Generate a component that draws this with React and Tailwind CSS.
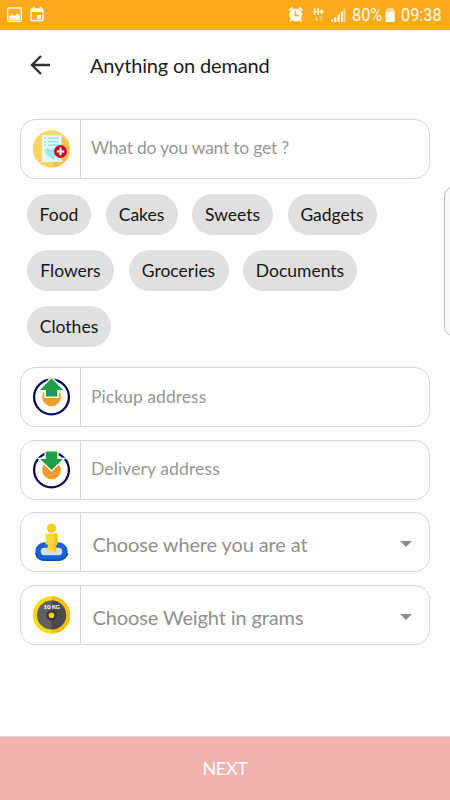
import React from "react";

const LATO = "font-['Lato',sans-serif]";

function ListIcon() {
  return (
    <svg width="40" height="40" viewBox="0 0 40 40">
      <defs>
        <clipPath id="list-clip"><circle cx="20.5" cy="20" r="18.7" /></clipPath>
      </defs>
      <circle cx="20.5" cy="20" r="18.7" fill="#fbd567" />
      <path d="M22 6.5 30.5 6.5 38 14V30L28 38H22Z" fill="#f6c24f" clipPath="url(#list-clip)" />
      <path d="M11 6.3H30.5V33H11Z" fill="#e0fafd" />
      <g fill="#8ee0ee">
        <rect x="13" y="8.5" width="2" height="1.3" /><rect x="17" y="8.5" width="11" height="1.3" />
        <rect x="13" y="12" width="2" height="1.3" /><rect x="17" y="12" width="11" height="1.3" />
        <rect x="13" y="15.5" width="2" height="1.3" /><rect x="17" y="15.5" width="11" height="1.3" />
      </g>
      <path d="M14 22c0-3 4-3.500 5.500-1 1.500-2.500 5.500-2 5.500 1L23.500 31C20 29 14 26 14 22Z" fill="#a2e3f2" />
      <circle cx="29.500" cy="22.500" r="6.500" fill="#c40d22" />
      <path d="M29.500 18.800v7.400M25.800 22.500h7.400" stroke="#fff" strokeWidth="2" />
    </svg>
  );
}

function PickupIcon() {
  return (
    <svg width="40" height="40" viewBox="0 0 40 40">
      <circle cx="20.500" cy="20" r="17.400" fill="#fff" stroke="#080c5c" strokeWidth="2.300" />
      <circle cx="20.500" cy="20" r="9.300" fill="#f59a2c" />
      <path d="M20.500 1.200 32 13H26.300V19.500H14.900V13H9Z" fill="#1fa046" stroke="#fff" strokeWidth="3" style={{ paintOrder: "stroke" }} />
    </svg>
  );
}

function DeliveryIcon() {
  return (
    <svg width="40" height="40" viewBox="0 0 40 40">
      <circle cx="20.500" cy="20" r="17.400" fill="#fff" stroke="#080c5c" strokeWidth="2.300" />
      <circle cx="20.500" cy="20" r="9.300" fill="#f59a2c" />
      <path d="M14.800 1.500H26.300V9H32L20.500 20 9 9H14.800Z" fill="#1fa046" stroke="#fff" strokeWidth="2.600" style={{ paintOrder: "stroke" }} />
    </svg>
  );
}

function PersonIcon() {
  return (
    <svg width="40" height="40" viewBox="0 0 40 40">
      <rect x="7" y="23" width="27" height="13" rx="6.500" fill="#d9dfe8" stroke="#1265d2" strokeWidth="5.500" />
      <path d="M4.700 31c1 5 5 7.200 9 7.200h13.600c5 0 8.500-3.200 9.400-7.200" fill="none" stroke="#0b4fb4" strokeWidth="1.500" />
      <path d="M14.500 11.500h12v11H25.200V29.500H16.700V22.500H14.500Z" fill="#fcd53a" />
      <path d="M23 11.500h3.500v11H25.200V29.500H23Z" fill="#f6c51f" />
      <circle cx="20.500" cy="6" r="4.500" fill="#fbc928" />
      <path d="M17 8.500c2 1.900 5.400 1.900 7.400 0" stroke="#f3b31b" strokeWidth="1" fill="none" />
    </svg>
  );
}

function WeightIcon() {
  return (
    <svg width="40" height="40" viewBox="0 0 40 40">
      <circle cx="20.500" cy="20" r="18.700" fill="#fddb09" />
      <path d="M20.500 1.300a18.700 18.700 0 0 1 0 37.400Z" fill="#f8bd12" />
      <circle cx="20.500" cy="20" r="14.600" fill="#606163" />
      <path d="M20.500 5.400a14.600 14.600 0 0 1 0 29.200Z" fill="#4a4a4c" />
      <circle cx="20.500" cy="20.300" r="5.200" fill="#38383a" />
      <circle cx="20.500" cy="20.300" r="2.800" fill="#fdce1a" />
      <text x="20.700" y="14" textAnchor="middle" fontFamily="Lato, sans-serif" fontWeight="900" fontSize="6" fill="#fff" textLength="16.500">10 KG</text>
    </svg>
  );
}

function Caret() {
  return (
    <svg width="12" height="6" viewBox="0 0 12 6" className="mt-[4px] mr-[17px] shrink-0">
      <path d="M0 0h12L6 6Z" fill="#8c8c8c" />
    </svg>
  );
}

function Field({ icon, label, select, textClass }) {
  return (
    <div className="flex h-[60px] w-[410px] items-stretch rounded-[15px] border border-[#d6d6d6] bg-white">
      <div className="flex w-[60px] shrink-0 items-center justify-center border-r border-[#d6d6d6]">{icon}</div>
      <div className="flex flex-1 items-center justify-between">
        <span className={`leading-6 whitespace-nowrap ${textClass}`}>{label}</span>
        {select && <Caret />}
      </div>
    </div>
  );
}

const selectText = "mt-[4px] ml-[11.500px] text-[20px] tracking-[-0.120px] text-[#8f8f8f]";

function StatusBar() {
  return (
    <div className="flex h-[30px] items-center bg-[#fbab1a] text-white">
      <svg width="50" height="30" viewBox="0 0 50 30" className="shrink-0">
        <rect x="7.700" y="8" width="13.600" height="13.300" rx="1" fill="none" stroke="#fffbe8" strokeWidth="1.400" />
        <path d="M9 17l3-3 2.500 2.200 3-3L20 16v4H9Z" fill="#fffbe8" />
        <rect x="31" y="9" width="12" height="11.500" rx="1" fill="none" stroke="#fffbe8" strokeWidth="1.500" />
        <path d="M31 9h12v3H31zM32.800 6.800h1.800v3h-1.800zM39.700 6.800h1.800v3h-1.800zM37 15h4v4h-4z" fill="#fffbe8" />
      </svg>
      <svg width="66" height="30" viewBox="284 0 66 30" className="ml-[234px] shrink-0">
        <circle cx="295.700" cy="15" r="6.500" fill="#fffbe8" />
        <path d="M289 10.500l3.500-3M302.400 10.500l-3.500-3M291.500 19.500l-1.500 2M300 19.500l1.500 2" stroke="#fffbe8" strokeWidth="1.700" />
        <path d="M295.500 11.200v4.300h3" fill="none" stroke="#fbab1a" strokeWidth="1.400" />
        <text x="313.500" y="14.500" fontFamily="Roboto, sans-serif" fontWeight="700" fontSize="8.500" fill="#fffbe8" textLength="10.500" lengthAdjust="spacingAndGlyphs">H+</text>
        <path d="M316.500 16.500v4m-1.500-1.500 1.500 1.500 1.500-1.500M321 20.500v-4m-1.500 1.500 1.500-1.500 1.500 1.500" stroke="#fddc93" strokeWidth="0.900" fill="none" />
        <path d="M331 22v-2l2-1v3zM334 22v-4l2.300-1.500V22zM337.500 22v-6.500l2.300-2V22z" fill="#fffbe8" />
        <path d="M341 22V12.500l1.800-1.800V22z" fill="#fffbe8" />
        <path d="M343.500 22V10l2-2V22z" fill="#fddc93" />
      </svg>
      <span className="ml-[2px] w-[31px] shrink-0 origin-left scale-x-[0.880] font-['Roboto',sans-serif] text-[18.500px] leading-[30px] text-[#fffbe8]">80%</span>
      <svg width="12" height="30" viewBox="0 0 12 30" className="ml-[1px] shrink-0">
        <path d="M2.500 9V10H1.500V11.500H10.800V10H9.500V8H3.500V9Z" fill="#fddc93" />
        <rect x="1.500" y="11.500" width="9.300" height="10.500" fill="#fffbe8" />
      </svg>
      <span className="ml-[4.500px] w-[42px] shrink-0 origin-left scale-x-[0.880] font-['Roboto',sans-serif] text-[18.500px] leading-[30px] text-[#fffbe8]">09:38</span>
    </div>
  );
}

const chips = [
  { label: "Food", width: "w-[64px]" },
  { label: "Cakes", width: "w-[72px]" },
  { label: "Sweets", width: "w-[81px]" },
  { label: "Gadgets", width: "w-[89px]" },
  { label: "Flowers", width: "w-[87px]" },
  { label: "Groceries", width: "w-[100px]" },
  { label: "Documents", width: "w-[114px]" },
  { label: "Clothes", width: "w-[84px]" },
];

export default function App() {
  return (
    <div className={`relative flex h-[800px] w-[450px] flex-col overflow-hidden bg-white ${LATO}`}>
      <StatusBar />
      <header className="flex h-[70px] items-center">
        <svg width="20" height="20" viewBox="0 0 20 20" className="ml-[30px]" fill="none" stroke="#303030" strokeWidth="2.400">
          <path d="M20 10H2M11 1 2 10l9 9" />
        </svg>
        <h1 className="ml-10 text-[20px] leading-6 tracking-[-0.180px] text-[#1c1c1c]">Anything on demand</h1>
      </header>
      <main className="flex flex-1 flex-col px-5 pt-[19px]">
        <Field
          icon={<ListIcon />}
          label="What do you want to get ?"
          textClass="mb-[3px] ml-[10px] text-[17.500px] tracking-[-0.230px] text-[#969696]"
        />
        <div className="mt-[15px] mb-5 ml-[7px] flex w-[360px] flex-wrap gap-x-[14.500px] gap-y-[15px]">
          {chips.map((c) => (
            <span key={c.label} className={`flex h-[41px] items-center justify-center rounded-full bg-[#e0e0e0] pt-[2px] text-[17.500px] text-[#161616] ${c.width}`}>
              {c.label}
            </span>
          ))}
        </div>
        <div className="flex flex-col gap-[12.500px]">
          <Field icon={<PickupIcon />} label="Pickup address" textClass="mb-[1px] ml-[10px] text-[17.500px] tracking-[0.050px] text-[#969696]" />
          <Field icon={<DeliveryIcon />} label="Delivery address" textClass="mb-[1px] ml-[10px] text-[17.500px] tracking-[0.120px] text-[#969696]" />
          <Field icon={<PersonIcon />} label="Choose where you are at" select textClass={selectText} />
          <Field icon={<WeightIcon />} label="Choose Weight in grams" select textClass={selectText} />
        </div>
      </main>
      <button className="flex h-[64px] shrink-0 items-center justify-center border-t border-[#e6d8d6] bg-[#f2b3af] text-[18px] tracking-[-0.300px] text-white">NEXT</button>
      <div className="absolute top-[187px] left-[444px] h-[149px] w-5 rounded-[9px] border border-[#bcbcbc] bg-[#fbfbfb]" />
    </div>
  );
}
